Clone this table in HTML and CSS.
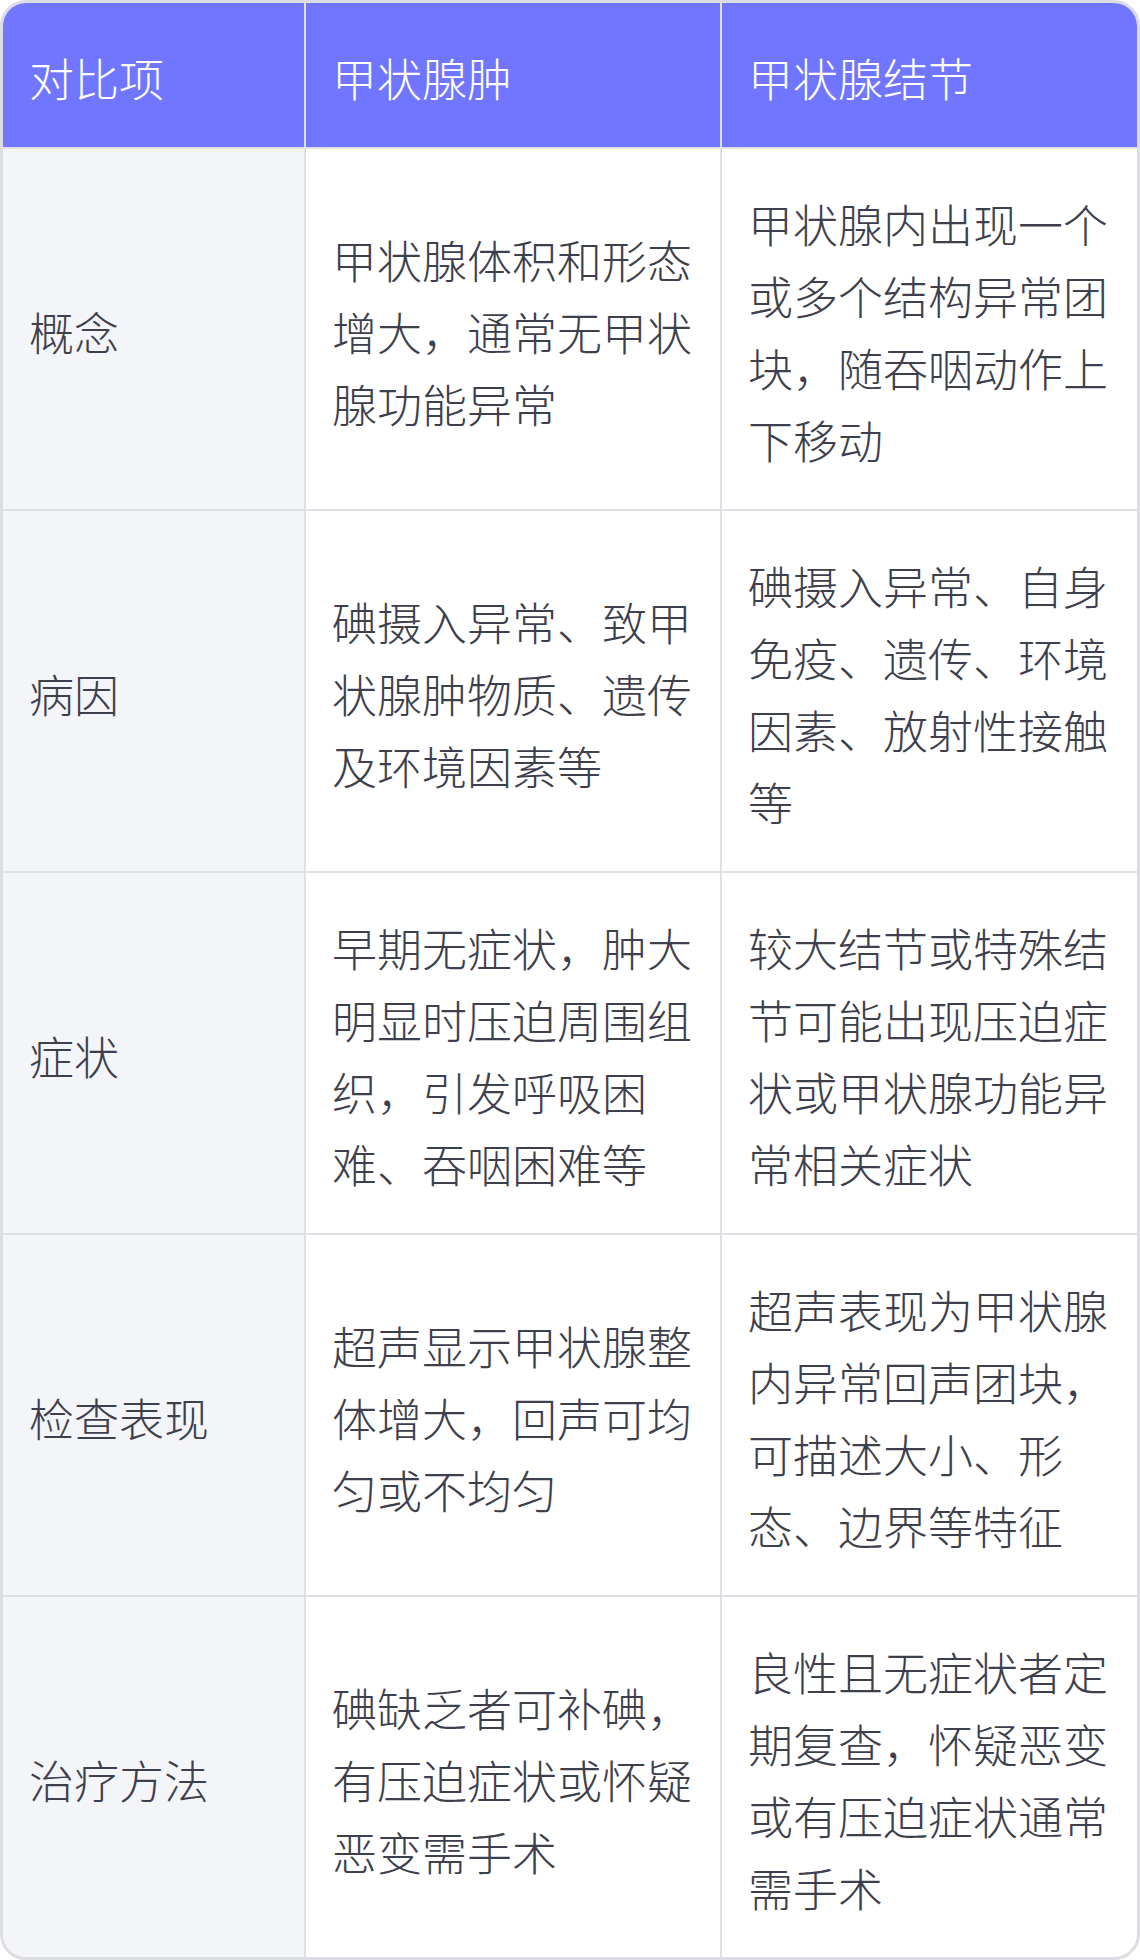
FILE: index.html
```html
<!DOCTYPE html>
<html lang="zh-CN">
<head>
    <meta charset="UTF-8">
    <meta name="viewport" content="width=device-width, initial-scale=1.0">
    <title>甲状腺肿与甲状腺结节对比</title>
    <link rel="stylesheet" href="styles.css">
</head>
<body>

    <div class="table-wrap">
        <table class="compare">
            <thead>
                <tr>
                    <th class="col-item">对比项</th>
                    <th>甲状腺肿</th>
                    <th>甲状腺结节</th>
                </tr>
            </thead>
            <tbody>
                <tr>
                    <td class="item">概念</td>
                    <td>甲状腺体积和形态增大，通常无甲状腺功能异常</td>
                    <td>甲状腺内出现一个或多个结构异常团块，随吞咽动作上下移动</td>
                </tr>
                <tr>
                    <td class="item">病因</td>
                    <td>碘摄入异常、致甲状腺肿物质、遗传及环境因素等</td>
                    <td>碘摄入异常、自身免疫、遗传、环境因素、放射性接触等</td>
                </tr>
                <tr>
                    <td class="item">症状</td>
                    <td>早期无症状，肿大明显时压迫周围组织，引发呼吸困难、吞咽困难等</td>
                    <td>较大结节或特殊结节可能出现压迫症状或甲状腺功能异常相关症状</td>
                </tr>
                <tr>
                    <td class="item">检查表现</td>
                    <td>超声显示甲状腺整体增大，回声可均匀或不均匀</td>
                    <td>超声表现为甲状腺内异常回声团块，可描述大小、形态、边界等特征</td>
                </tr>
                <tr>
                    <td class="item">治疗方法</td>
                    <td>碘缺乏者可补碘，有压迫症状或怀疑恶变需手术</td>
                    <td>良性且无症状者定期复查，怀疑恶变或有压迫症状通常需手术</td>
                </tr>
            </tbody>
        </table>
    </div>

</body>
</html>
```

FILE: styles.css
```css
body {
    font-family: "Noto Sans CJK SC", "Noto Sans", sans-serif;
    background-color: #ffffff;
    color: #3d404c;
    margin: 0;
    padding: 0;
}
.table-wrap {
    border: 3px solid #dcdde2;
    border-radius: 26px;
    overflow: hidden;
}
.compare {
    width: 100%;
    border-collapse: collapse;
    table-layout: fixed;
    font-size: 45px;
    line-height: 72px;
    font-weight: 300;
}
.compare th,
.compare td {
    box-sizing: border-box;
    padding: 39px 26px 33px 26px;
    text-align: left;
    vertical-align: middle;
    border: 2px solid #dfe0e6;
}
.compare tr > :first-child {
    border-left: none;
}
.compare tr > :last-child {
    border-right: none;
}
.compare thead th {
    border-top: none;
}
.compare tbody tr:last-child td {
    border-bottom: none;
}
.compare th {
    background-color: #7076ff;
    color: #ffffff;
    font-weight: 300;
}
.col-item {
    width: 302px;
}
.item {
    background-color: #f4f5f9;
}
```
